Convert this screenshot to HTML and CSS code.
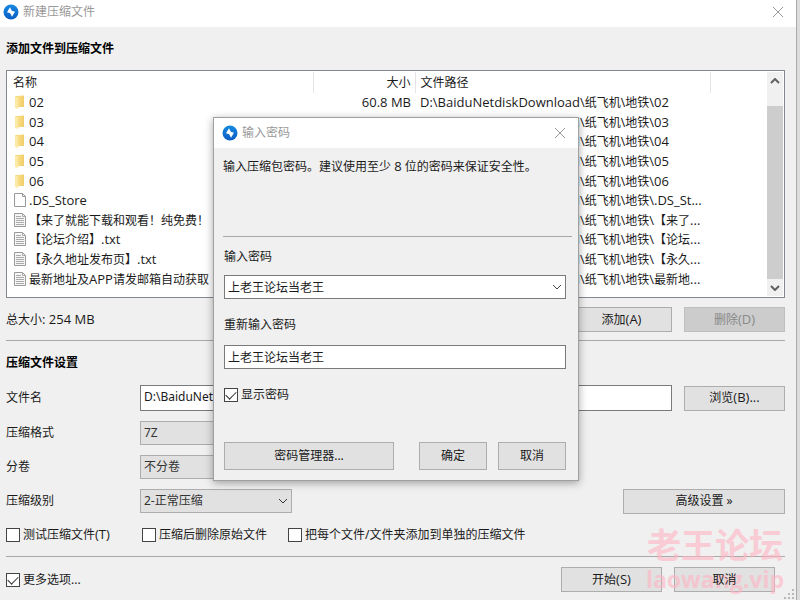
FILE: index.html
```html
<!DOCTYPE html>
<html lang="zh-CN">
<head>
<meta charset="utf-8">
<meta name="viewport" content="width=device-width, initial-scale=1">
<title>新建压缩文件</title>
<link rel="stylesheet" href="styles.css">
</head>
<body>
<svg class="defs" aria-hidden="true">
  <defs>
    <linearGradient id="blue" x1="0" y1="0" x2="0" y2="1">
      <stop offset="0" stop-color="#1689e0"/><stop offset="1" stop-color="#0a5cc4"/>
    </linearGradient>
    <linearGradient id="gold" x1="0" y1="0" x2="1" y2="0">
      <stop offset="0" stop-color="#fbe08d"/><stop offset="1" stop-color="#f0cd68"/>
    </linearGradient>
  </defs>
  <symbol id="app" viewBox="0 0 16 16">
    <circle cx="8" cy="8" r="7.5" fill="url(#blue)"/>
    <path d="M7 3.200 4 8.200 7.200 9.200 9 12.800 12 7.800 8.800 6.800z" fill="#fff"/>
  </symbol>
  <symbol id="close" viewBox="0 0 12 12"><path d="M1 1 11 11M11 1 1 11" stroke="#999" stroke-width="1" fill="none"/></symbol>
  <symbol id="chevron" viewBox="0 0 10 6"><path d="M1 1 5 5 9 1" fill="none" stroke="currentColor" stroke-width="1"/></symbol>
  <symbol id="arrow" viewBox="0 0 10 6"><path d="M1 1 5 5 9 1" fill="none" stroke="currentColor" stroke-width="2"/></symbol>
  <symbol id="folder" viewBox="0 0 14 16">
    <path d="M2 2h9v11H2z" fill="#f0cd68"/><path d="M4 2 11 1.500V12.500L4 13.500z" fill="url(#gold)"/><path d="M2 2 5 3.500V15L2 14z" fill="#fde9a6"/>
  </symbol>
  <symbol id="blank" viewBox="0 0 14 16"><path d="M1.500 1.500h8l3 3v10h-11z" fill="#fdfdfd" stroke="#999"/><path d="M9.500 1.500v3h3" fill="none" stroke="#999"/></symbol>
  <symbol id="text" viewBox="0 0 14 16"><path d="M1.500 1.500h8l3 3v10h-11z" fill="#f6f6f6" stroke="#999"/><path d="M9.500 1.500v3h3M3 4.500h5M3 6.500h8M3 8.500h8M3 10.500h8M3 12.500h8" fill="none" stroke="#aaa"/></symbol>
</svg>

<div class="window">
  <header class="titlebar">
    <svg class="app-icon"><use href="#app"/></svg>
    <span>新建压缩文件</span>
    <button class="close" type="button" aria-label="关闭"><svg><use href="#close"/></svg></button>
  </header>

  <main class="content">
    <h1 class="heading">添加文件到压缩文件</h1>
    <div class="listbox">
      <table class="files">
        <colgroup><col class="c-name"><col class="c-size"><col class="c-path"><col></colgroup>
        <thead><tr><th>名称</th><th class="size">大小</th><th>文件路径</th><th></th></tr></thead>
        <tbody>
          <tr><td><svg><use href="#folder"/></svg><span class="latin">02</span></td><td class="size"><span class="latin">60.8 MB</span></td><td><span class="latin">D:\BaiduNetdiskDownload\</span>纸飞机\地铁<span class="latin">\02</span></td><td></td></tr>
          <tr><td><svg><use href="#folder"/></svg><span class="latin">03</span></td><td></td><td><span class="latin">D:\BaiduNetdiskDownload\</span>纸飞机\地铁<span class="latin">\03</span></td><td></td></tr>
          <tr><td><svg><use href="#folder"/></svg><span class="latin">04</span></td><td></td><td><span class="latin">D:\BaiduNetdiskDownload\</span>纸飞机\地铁<span class="latin">\04</span></td><td></td></tr>
          <tr><td><svg><use href="#folder"/></svg><span class="latin">05</span></td><td></td><td><span class="latin">D:\BaiduNetdiskDownload\</span>纸飞机\地铁<span class="latin">\05</span></td><td></td></tr>
          <tr><td><svg><use href="#folder"/></svg><span class="latin">06</span></td><td></td><td><span class="latin">D:\BaiduNetdiskDownload\</span>纸飞机\地铁<span class="latin">\06</span></td><td></td></tr>
          <tr><td><svg><use href="#blank"/></svg><span class="latin">.DS_Store</span></td><td></td><td><span class="latin">D:\BaiduNetdiskDownload\</span>纸飞机\地铁<span class="latin">\.DS_St...</span></td><td></td></tr>
          <tr><td><svg><use href="#text"/></svg>【来了就能下载和观看！纯免费！</td><td></td><td><span class="latin">D:\BaiduNetdiskDownload\</span>纸飞机\地铁<span class="latin">\</span>【来了<span class="latin">...</span></td><td></td></tr>
          <tr><td><svg><use href="#text"/></svg>【论坛介绍】<span class="latin">.txt</span></td><td></td><td><span class="latin">D:\BaiduNetdiskDownload\</span>纸飞机\地铁<span class="latin">\</span>【论坛<span class="latin">...</span></td><td></td></tr>
          <tr><td><svg><use href="#text"/></svg>【永久地址发布页】<span class="latin">.txt</span></td><td></td><td><span class="latin">D:\BaiduNetdiskDownload\</span>纸飞机\地铁<span class="latin">\</span>【永久<span class="latin">...</span></td><td></td></tr>
          <tr><td><svg><use href="#text"/></svg>最新地址及<span class="latin">APP</span>请发邮箱自动获取</td><td></td><td><span class="latin">D:\BaiduNetdiskDownload\</span>纸飞机\地铁<span class="latin">\</span>最新地<span class="latin">...</span></td><td></td></tr>
        </tbody>
      </table>
      <div class="scrollbar">
        <button type="button" class="up" aria-label="向上"><svg><use href="#arrow"/></svg></button>
        <div class="track"><div class="thumb"></div></div>
        <button type="button" aria-label="向下"><svg><use href="#arrow"/></svg></button>
      </div>
    </div>

    <div class="summary">
      <span class="grow">总大小<span class="latin">: 254 MB</span></span>
      <button class="btn" type="button">添加<span class="latin">(A)</span></button>
      <button class="btn" type="button" disabled>删除<span class="latin">(D)</span></button>
    </div>

    <h2 class="heading ruled">压缩文件设置</h2>
    <form class="settings">
      <label for="name">文件名</label>
      <div class="line">
        <input class="field path" id="name" type="text" value="D:\BaiduNetdiskDownload\纸飞机">
        <button class="btn" type="button">浏览<span class="latin">(B)...</span></button>
      </div>
      <label for="format">压缩格式</label>
      <div class="line"><span class="pick"><select id="format"><option>7Z</option></select><svg><use href="#chevron"/></svg></span></div>
      <label for="split">分卷</label>
      <div class="line"><span class="pick"><select id="split"><option>不分卷</option></select><svg><use href="#chevron"/></svg></span></div>
      <label for="level">压缩级别</label>
      <div class="line">
        <span class="pick"><select id="level"><option>2-正常压缩</option></select><svg><use href="#chevron"/></svg></span>
        <button class="btn advanced" type="button">高级设置 »</button>
      </div>
    </form>
    <div class="checks">
      <label class="check"><input type="checkbox"><span>测试压缩文件<span class="latin">(T)</span></span></label>
      <label class="check"><input type="checkbox">压缩后删除原始文件</label>
      <label class="check"><input type="checkbox">把每个文件/文件夹添加到单独的压缩文件</label>
    </div>
    <footer class="footer">
      <label class="check grow"><input type="checkbox" checked>更多选项...</label>
      <button class="btn" type="button">开始<span class="latin">(S)</span></button>
      <button class="btn" type="button"><span class="raised">取消</span></button>
    </footer>
  </main>

  <div class="watermark"><span class="mark-name">老王论坛</span><span class="mark-site">laowang.vip</span></div>
  <svg class="grip" viewBox="0 0 11 11" aria-hidden="true"><path d="M8 0h2v2h-2zM4 4h2v2h-2zM8 4h2v2h-2zM0 8h2v2h-2zM4 8h2v2h-2zM8 8h2v2h-2z" fill="#b8b8b8"/></svg>

  <section class="dialog" role="dialog" aria-labelledby="dialog-title">
    <header class="titlebar">
      <svg class="app-icon"><use href="#app"/></svg>
      <span id="dialog-title">输入密码</span>
      <button class="close" type="button" aria-label="关闭"><svg><use href="#close"/></svg></button>
    </header>
    <p class="hint">输入压缩包密码。建议使用至少 <span class="latin">8</span> 位的密码来保证安全性。</p>
    <form class="password">
      <label for="pw">输入密码</label>
      <div class="combo"><input class="field" id="pw" type="text" value="上老王论坛当老王"><button type="button" aria-label="展开"><svg><use href="#chevron"/></svg></button></div>
      <label for="pw2">重新输入密码</label>
      <input class="field" id="pw2" type="text" value="上老王论坛当老王">
      <label class="check"><input type="checkbox" checked>显示密码</label>
      <div class="actions">
        <button class="btn manager" type="button">密码管理器...</button>
        <button class="btn" type="button">确定</button>
        <button class="btn" type="button">取消</button>
      </div>
    </form>
  </section>
</div>
</body>
</html>
```
FILE: styles.css
```css
* { box-sizing: border-box; }
body {
  margin: 0;
  padding-right: 3px;
  background: #dcdcdc;
  color: #1a1a1a;
  font: 12px/20px "Noto Sans", "Noto Sans CJK SC", sans-serif;
}
button, input, select { font: inherit; color: inherit; margin: 0; }
svg { display: block; }
.defs { position: absolute; width: 0; height: 0; }
.grow { flex: 1; }
.latin { font-family: "Open Sans", "Noto Sans CJK SC", sans-serif; font-size: 13px; line-height: 1; }

.window {
  position: relative;
  min-height: 100vh;
  background: #f0f0f0;
  border-right: 1px solid #aaa;
}
.titlebar {
  display: flex;
  align-items: center;
  gap: 4px;
  height: 27px;
  padding: 0 12px 4px 3px;
  background: #fff;
  color: #999;
}
.app-icon { width: 16px; height: 16px; }
.close { margin-left: auto; padding: 0; border: 0; background: none; }
.close svg { width: 12px; height: 12px; }

.content { padding: 12px 11px 0 6px; }
.heading { margin: 0; font-size: 12px; line-height: 20px; font-weight: 700; color: #000; }

.listbox {
  display: flex;
  height: 228px;
  margin-top: 11px;
  padding: 1px;
  background: #fff;
  border: 1px solid #828790;
}
.files {
  flex: 1;
  width: 100%;
  height: 217px;
  table-layout: fixed;
  border-collapse: collapse;
}
.c-name { width: 305px; }
.c-size { width: 102px; }
.c-path { width: 295px; }
.files th, .files td {
  padding: 0 4px 0 5px;
  text-align: left;
  font-weight: 400;
  line-height: 19px;
  white-space: nowrap;
  overflow: hidden;
}
.files th { height: 21px; border-right: 1px solid #e5e5e5; }
.files th:last-child { border-right: 0; }
.files .size { text-align: right; }
.files td svg { float: left; width: 14px; height: 16px; margin: 1px 2px 0 0; }

.scrollbar { display: flex; flex-direction: column; width: 16px; background: #f0f0f0; }
.scrollbar button {
  display: grid;
  place-items: center;
  height: 17px;
  padding: 0;
  border: 0;
  background: none;
  color: #606060;
}
.scrollbar svg { width: 10px; height: 6px; }
.up svg { transform: rotate(180deg); }
.track { flex: 1; padding-top: 17px; }
.thumb { height: 100%; background: #cdcdcd; }

.btn {
  width: 101px;
  height: 25px;
  padding: 0;
  background: #e1e1e1;
  border: 1px solid #adadad;
}
.btn:disabled { background: #ccc; border-color: #bfbfbf; color: #888; }
.summary { display: flex; align-items: center; gap: 12px; margin-top: 9px; }

.ruled { margin-top: 8px; padding-top: 12px; border-top: 1px solid #a8a8a8; }

.settings {
  display: grid;
  grid-template-columns: 134px 1fr;
  grid-template-rows: 26px repeat(3, 24px);
  row-gap: 10px;
  align-items: center;
  margin-top: 12px;
}
.line { display: flex; align-items: center; gap: 12px; }
.field { width: 100%; height: 24px; padding: 0 3px; background: #fff; border: 1px solid #7a7a7a; border-radius: 0; }
.path { flex: 1; height: 26px; padding-bottom: 4px; }
.pick { position: relative; width: 152px; color: #333; }
.pick select {
  display: block;
  width: 100%;
  height: 24px;
  padding: 0 3px;
  appearance: none;
  background: #e1e1e1;
  border: 1px solid #adadad;
  border-radius: 0;
}
.pick svg { position: absolute; right: 4px; top: 9px; width: 10px; height: 6px; pointer-events: none; }
.advanced { width: 162px; margin-left: auto; }

.check { display: flex; align-items: center; gap: 3px; }
.check input {
  appearance: none;
  display: grid;
  place-items: center;
  width: 14px;
  height: 14px;
  background: #fff;
  border: 1px solid #444;
}
.check input:checked::after {
  content: "";
  width: 9px;
  height: 5px;
  border: solid #333;
  border-width: 0 0 1px 1px;
  transform: translateY(-1px) rotate(-45deg);
}
.checks { display: flex; gap: 21px; margin-top: 12px; }
.checks .check:first-child { width: 115px; }
.footer {
  display: flex;
  align-items: center;
  gap: 12px;
  margin-top: 11px;
  padding: 10px 10px 0 0;
  border-top: 1px solid #a8a8a8;
}
.raised { position: relative; z-index: 1; }

.watermark {
  position: absolute;
  right: 12px;
  bottom: 6px;
  display: grid;
  justify-items: center;
  color: #ffb4c2;
  opacity: .6;
  font-weight: 700;
  pointer-events: none;
}
.mark-name { font-size: 34px; line-height: 38px; }
.mark-site { font-family: "Open Sans", sans-serif; font-size: 23px; line-height: 30px; }
.grip { position: absolute; right: 1px; bottom: 0; width: 11px; height: 11px; }

.dialog {
  position: absolute;
  z-index: 2;
  left: 213px;
  top: 117px;
  width: 366px;
  background: #f0f0f0;
  border: 1px solid #a0a0a0;
  box-shadow: 0 2px 8px rgba(0, 0, 0, .35);
}
.dialog .titlebar { height: 30px; padding: 0 12px 0 8px; }
.hint { margin: 0 6px 0 9px; padding-top: 9px; height: 89px; border-bottom: 1px solid #a8a8a8; }
.password { padding: 10px 12px 10px 10px; }
.password > label { display: block; }
.combo { position: relative; }
.combo button {
  position: absolute;
  inset: 1px 1px 1px auto;
  width: 16px;
  padding: 0;
  border: 0;
  background: none;
  color: #444;
}
.combo svg { width: 10px; height: 6px; margin: 0 auto; }
.password .field { display: block; margin: 10px 0 16px; }
.password .combo .field { margin: 8px 0 16px; }
.password > .check { display: flex; }
.actions { display: flex; gap: 11px; margin-top: 37px; }
.actions .btn { width: 68px; height: 28px; }
.actions .manager { width: 170px; margin-right: auto; }
```
